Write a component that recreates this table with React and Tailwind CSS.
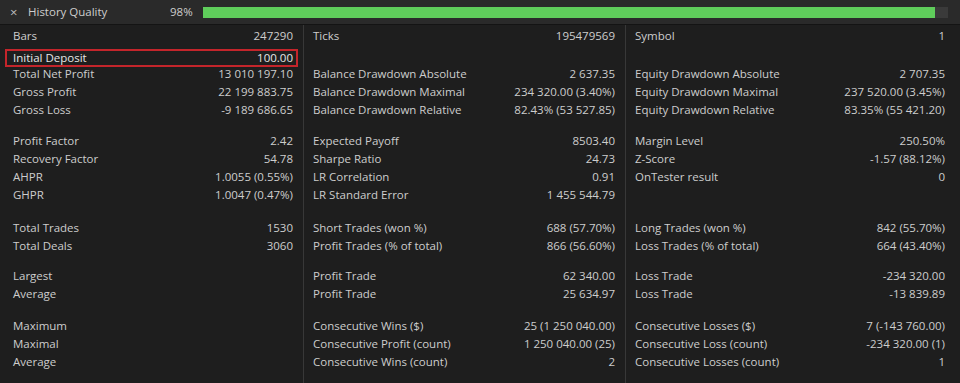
import React from 'react';

const col1 = [
  [['Bars', '247290'], ['Initial Deposit', '100.00', true], ['Total Net Profit', '13 010 197.10'], ['Gross Profit', '22 199 883.75'], ['Gross Loss', '-9 189 686.65']],
  [['Profit Factor', '2.42'], ['Recovery Factor', '54.78'], ['AHPR', '1.0055 (0.55%)'], ['GHPR', '1.0047 (0.47%)']],
  [['Total Trades', '1530'], ['Total Deals', '3060']],
  [['Largest', ''], ['Average', '']],
  [['Maximum', ''], ['Maximal', ''], ['Average', '']],
];

const col2 = [
  [['Ticks', '195479569'], ['', '', true], ['Balance Drawdown Absolute', '2 637.35'], ['Balance Drawdown Maximal', '234 320.00 (3.40%)'], ['Balance Drawdown Relative', '82.43% (53 527.85)']],
  [['Expected Payoff', '8503.40'], ['Sharpe Ratio', '24.73'], ['LR Correlation', '0.91'], ['LR Standard Error', '1 455 544.79']],
  [['Short Trades (won %)', '688 (57.70%)'], ['Profit Trades (% of total)', '866 (56.60%)']],
  [['Profit Trade', '62 340.00'], ['Profit Trade', '25 634.97']],
  [['Consecutive Wins ($)', '25 (1 250 040.00)'], ['Consecutive Profit (count)', '1 250 040.00 (25)'], ['Consecutive Wins (count)', '2']],
];

const col3 = [
  [['Symbol', '1'], ['', '', true], ['Equity Drawdown Absolute', '2 707.35'], ['Equity Drawdown Maximal', '237 520.00 (3.45%)'], ['Equity Drawdown Relative', '83.35% (55 421.20)']],
  [['Margin Level', '250.50%'], ['Z-Score', '-1.57 (88.12%)'], ['OnTester result', '0'], ['', '']],
  [['Long Trades (won %)', '842 (55.70%)'], ['Loss Trades (% of total)', '664 (43.40%)']],
  [['Loss Trade', '-234 320.00'], ['Loss Trade', '-13 839.89']],
  [['Consecutive Losses ($)', '7 (-143 760.00)'], ['Consecutive Loss (count)', '-234 320.00 (1)'], ['Consecutive Losses (count)', '1']],
];

// gaps between the groups of rows
const spacers = ['h-[13px]', 'h-[15px]', 'h-[12px]', 'h-[14px]'];

const Row = ({ label, value }) => (
  <div className="flex h-[18px] items-center justify-between whitespace-nowrap">
    <span>{label}</span>
    <span>{value}</span>
  </div>
);

const Column = ({ groups, boxed, className }) => (
  <div className={className}>
    {groups.map((group, gi) => (
      <React.Fragment key={gi}>
        {gi > 0 && <div className={spacers[gi - 1]} />}
        {group.map(([label, value, special], ri) => {
          if (special) {
            return boxed ? (
              <div
                key={ri}
                className="-ml-[8px] -mr-[5px] mt-[4px] mb-[-2px] flex h-[18px] items-center justify-between border-2 border-[#c4252b] pl-[6px] pr-[3px] text-[#e6e6e6]"
              >
                <span>{label}</span>
                <span>{value}</span>
              </div>
            ) : (
              <div key={ri} className="mt-[4px] mb-[-2px] h-[18px]" />
            );
          }
          return <Row key={ri} label={label} value={value} />;
        })}
      </React.Fragment>
    ))}
  </div>
);

export default function App() {
  return (
    <div
      className="h-[383px] w-[960px] overflow-hidden bg-[#1e1e1e] text-[11.5px] text-[#cdcdcd]"
      style={{ fontFamily: '"Open Sans", "Noto Sans", sans-serif' }}
    >
      <div className="flex h-[25px] items-center border-b border-[#141414] bg-[#2a2a2a]">
        <span className="ml-[10px] w-[18px] text-[13px] leading-none text-[#bdbdbd]">×</span>
        <span className="w-[142px]">History Quality</span>
        <span className="w-[33px]">98%</span>
        <div className="flex h-[11px] w-[745px] bg-[#3a3a3a]">
          <div className="h-full w-[732px] bg-[#5fcd5b]" />
        </div>
      </div>
      <div className="flex h-[358px]">
        <Column groups={col1} boxed className="w-[304px] border-r border-[#383838] pl-[13px] pr-[10px] pt-[2px]" />
        <Column groups={col2} className="w-[322px] border-r border-[#383838] pl-[9px] pr-[10px] pt-[2px]" />
        <Column groups={col3} className="flex-1 pl-[9px] pr-[15px] pt-[2px]" />
      </div>
    </div>
  );
}
